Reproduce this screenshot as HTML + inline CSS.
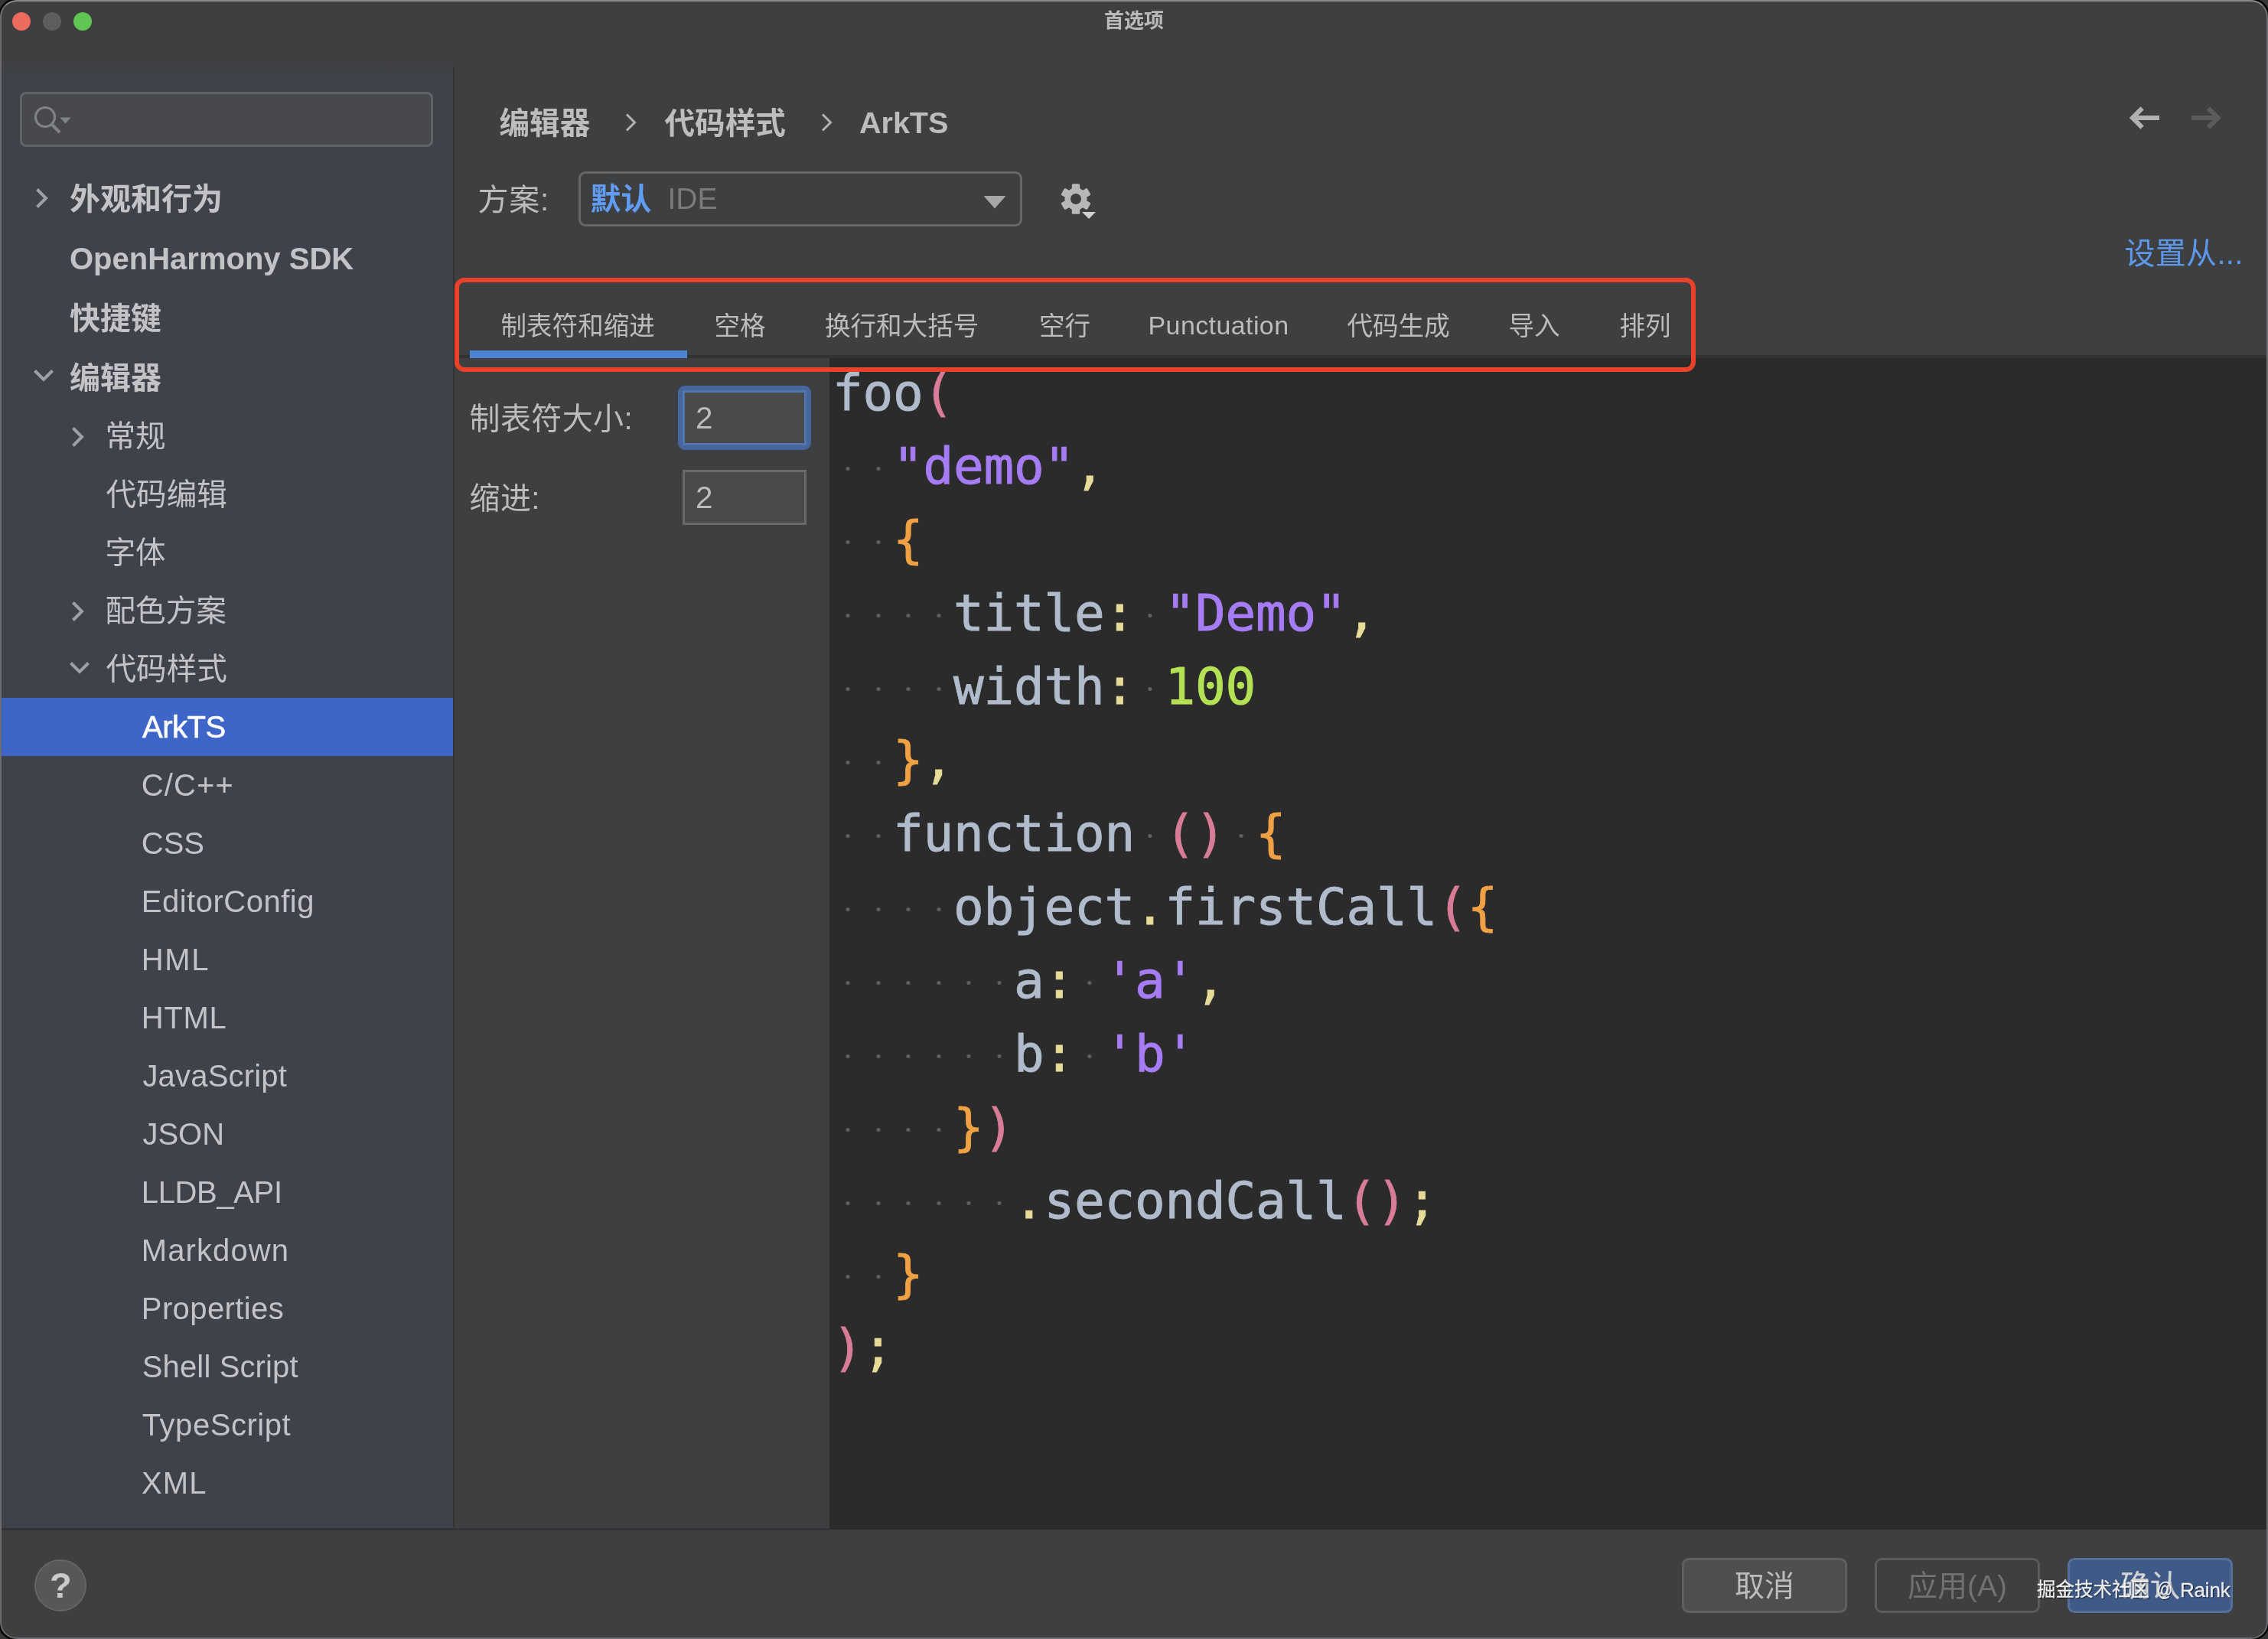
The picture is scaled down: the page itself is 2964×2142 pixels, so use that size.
<!DOCTYPE html>
<html lang="zh-CN">
<head>
<meta charset="utf-8">
<title>首选项</title>
<style>
html,body{margin:0;padding:0;}
body{width:2964px;height:2142px;background:#363636;overflow:hidden;position:relative;
  font-family:"Liberation Sans","Noto Sans CJK SC",sans-serif;color:#bbbcbe;}
.abs{position:absolute;}
.t{position:absolute;white-space:nowrap;line-height:1;}
#win{position:absolute;left:0;top:0;width:2964px;height:2142px;box-sizing:border-box;
  border:2px solid #6c6e71;border-top-color:#8a8c8e;border-radius:22px;background:#3e3f41;overflow:hidden;will-change:transform;box-shadow:0 0 0 2.5px #000;}
/* everything inside #inner is positioned in page coordinates */
#inner{position:absolute;left:-2px;top:-2px;width:2964px;height:2142px;}
#sidebar{left:2px;top:88px;width:590px;height:1909px;background:#3f424a;}
#sidegrad{left:2px;top:76px;width:590px;height:24px;background:linear-gradient(#3e3f41,#3f424a);}
#sidesep{left:592.4px;top:88px;width:1.6px;height:1908px;background:#323337;}
.light{border-radius:50%;width:24px;height:24px;top:16px;}
.row{position:absolute;left:0;width:592px;height:76px;}
.si{position:absolute;white-space:nowrap;font-size:40px;line-height:76px;height:76px;color:#c1c3c7;}
.b{font-weight:700;}
.chev{position:absolute;}
#editor{left:1084px;top:468px;width:1878px;height:1531px;background:#2b2b2b;}
.code{position:absolute;left:1088px;white-space:pre;font-family:"DejaVu Sans Mono","Liberation Mono",monospace;
  font-size:66px;line-height:96px;height:96px;color:#b0bccc;letter-spacing:-0.23px;-webkit-text-stroke:0.9px currentColor;}
.ws{display:inline-block;width:39.5px;height:96px;vertical-align:top;background:radial-gradient(circle at 19.9px 50.5px,#5f5f5f 0,#5f5f5f 1.9px,rgba(95,95,95,0) 3.1px);}
.pk{color:#d87c98;} .pu{color:#a67cf5;} .ye{color:#e6dc98;} .or{color:#f0a144;} .gr{color:#b5e254;}
.tab{position:absolute;top:408px;font-size:33.55px;line-height:38px;color:#bbbcbe;white-space:nowrap;}
.btn{position:absolute;top:2036px;height:72px;width:216px;box-sizing:border-box;border-radius:9px;
  font-size:39px;line-height:68px;text-align:center;}
</style>
</head>
<body>
<div id="win"><div id="inner">

<!-- title bar -->
<div class="abs light" style="left:16px;background:#ed6a5e;"></div>
<div class="abs light" style="left:56px;background:#5d5e60;"></div>
<div class="abs light" style="left:96px;background:#61c554;"></div>
<div class="t b" id="title" style="left:1443px;top:14px;font-size:26px;line-height:26px;color:#b9babc;">首选项</div>

<!-- sidebar -->
<div class="abs" id="sidebar"></div>
<div class="abs" id="sidegrad"></div>
<div class="abs" id="sidesep"></div>

<div class="abs" id="search" style="left:26px;top:120px;width:540px;height:72px;box-sizing:border-box;border:3px solid #5f6266;border-radius:8px;background:#47494c;"></div>
<svg class="abs" style="left:40px;top:132px;" width="60" height="48" viewBox="0 0 60 48">
  <circle cx="19" cy="21" r="12.5" fill="none" stroke="#7f8388" stroke-width="3.2"/>
  <path d="M27.5 30.5 L38 41" stroke="#7f8388" stroke-width="4" fill="none"/>
  <path d="M38.5 21.5 h14 l-7 8 z" fill="#7f8388"/>
</svg>

<div id="tree">
<div class="row" id="selrow" style="left:2px;top:912px;width:590px;background:#3e65c8;"></div>
<div class="si b" id="r0" style="left:91px;top:222px;">外观和行为</div>
<svg class="chev" style="left:45.0px;top:243.8px;" width="20" height="30" viewBox="0 0 20 30"><path d="M3.5 3.5 L15 15 L3.5 26.5" fill="none" stroke="#9da0a6" stroke-width="4"/></svg>
<div class="si b" id="r1" style="left:91px;top:300px;">OpenHarmony SDK</div>
<div class="si b" id="r2" style="left:91px;top:378px;">快捷键</div>
<div class="si b" id="r3" style="left:91px;top:456px;">编辑器</div>
<svg class="chev" style="left:41.5px;top:480.6px;" width="30" height="20" viewBox="0 0 30 20"><path d="M3.5 3.5 L15 15 L26.5 3.5" fill="none" stroke="#9da0a6" stroke-width="4"/></svg>
<div class="si" id="r4" style="left:137.5px;top:532px;font-size:39.6px;">常规</div>
<svg class="chev" style="left:92.3px;top:555.5px;" width="20" height="30" viewBox="0 0 20 30"><path d="M3.5 3.5 L15 15 L3.5 26.5" fill="none" stroke="#9da0a6" stroke-width="4"/></svg>
<div class="si" id="r5" style="left:138.5px;top:608px;font-size:39.6px;">代码编辑</div>
<div class="si" id="r6" style="left:137.5px;top:684px;font-size:39.6px;">字体</div>
<div class="si" id="r7" style="left:137.5px;top:760px;font-size:39.6px;">配色方案</div>
<svg class="chev" style="left:92.3px;top:783.5px;" width="20" height="30" viewBox="0 0 20 30"><path d="M3.5 3.5 L15 15 L3.5 26.5" fill="none" stroke="#9da0a6" stroke-width="4"/></svg>
<div class="si" id="r8" style="left:138.5px;top:836px;font-size:39.6px;">代码样式</div>
<svg class="chev" style="left:89.4px;top:862.6px;" width="30" height="20" viewBox="0 0 30 20"><path d="M3.5 3.5 L15 15 L26.5 3.5" fill="none" stroke="#9da0a6" stroke-width="4"/></svg>
<div class="si" id="r9" style="left:186.0px;top:912px;color:#fff;letter-spacing:-0.50px;-webkit-text-stroke:0.6px #fff;">ArkTS</div>
<div class="si" id="r10" style="left:184.8px;top:988px;letter-spacing:1.10px;">C/C++</div>
<div class="si" id="r11" style="left:184.8px;top:1064px;">CSS</div>
<div class="si" id="r12" style="left:184.8px;top:1140px;letter-spacing:0.50px;">EditorConfig</div>
<div class="si" id="r13" style="left:184.8px;top:1216px;letter-spacing:1.60px;">HML</div>
<div class="si" id="r14" style="left:184.8px;top:1292px;letter-spacing:0.70px;">HTML</div>
<div class="si" id="r15" style="left:186.4px;top:1368px;letter-spacing:0.20px;">JavaScript</div>
<div class="si" id="r16" style="left:186.4px;top:1444px;">JSON</div>
<div class="si" id="r17" style="left:184.8px;top:1520px;letter-spacing:-0.36px;">LLDB_API</div>
<div class="si" id="r18" style="left:184.8px;top:1596px;letter-spacing:1.10px;">Markdown</div>
<div class="si" id="r19" style="left:184.8px;top:1672px;letter-spacing:0.40px;">Properties</div>
<div class="si" id="r20" style="left:185.8px;top:1748px;letter-spacing:0.13px;">Shell Script</div>
<div class="si" id="r21" style="left:185.8px;top:1824px;letter-spacing:0.55px;">TypeScript</div>
<div class="si" id="r22" style="left:185.1px;top:1900px;letter-spacing:1.10px;">XML</div>
</div>

<!-- right panel -->
<div class="abs" id="editor"></div>


<!-- breadcrumb -->
<div class="t b" id="bc1" style="left:652.5px;top:140.5px;font-size:39.6px;line-height:40px;color:#bcbdbf;">编辑器</div>
<svg class="abs" style="left:814px;top:145px;" width="22" height="30" viewBox="0 0 22 30"><path d="M5 4.5 L15.5 15 L5 25.5" fill="none" stroke="#b2b3b5" stroke-width="3"/></svg>
<div class="t b" id="bc2" style="left:868.5px;top:140.5px;font-size:39.6px;line-height:40px;color:#bcbdbf;">代码样式</div>
<svg class="abs" style="left:1070px;top:145px;" width="22" height="30" viewBox="0 0 22 30"><path d="M5 4.5 L15.5 15 L5 25.5" fill="none" stroke="#b2b3b5" stroke-width="3"/></svg>
<div class="t b" id="bc3" style="left:1123px;top:140px;font-size:39.5px;line-height:40px;color:#bcbdbf;">ArkTS</div>

<!-- nav arrows -->
<svg class="abs" id="back" style="left:2780px;top:134px;" width="46" height="40" viewBox="0 0 46 40"><path d="M19.6 7.4 L7 20 L19.6 32.6 M7 20 H42" fill="none" stroke="#b0b1b2" stroke-width="6"/></svg>
<svg class="abs" id="fwd" style="left:2861px;top:134px;" width="46" height="40" viewBox="0 0 46 40"><path d="M25 7.4 L37.6 20 L25 32.6 M37.6 20 H3" fill="none" stroke="#5a5b5c" stroke-width="6"/></svg>

<!-- scheme row -->
<div class="t" id="schemeLbl" style="left:624.5px;top:241px;letter-spacing:0.8px;font-size:40px;line-height:40px;color:#bbbcbe;">方案:</div>
<div class="abs" id="combo" style="left:756px;top:224px;width:580px;height:72px;box-sizing:border-box;border:3px solid #646668;border-radius:9px;background:#3e3f41;"></div>
<div class="t b" id="schemeVal" style="left:771.5px;top:240px;font-size:40px;line-height:40px;color:#609cf2;">默认</div>
<div class="t" id="schemeIde" style="left:872.5px;top:240px;font-size:39px;line-height:40px;color:#787a7c;">IDE</div>
<svg class="abs" style="left:1284px;top:254px;" width="32" height="20" viewBox="0 0 32 20"><path d="M1.5 2 H30.5 L16 18.5 Z" fill="#a5a6a8"/></svg>
<svg class="abs" id="gear" style="left:1382px;top:236px;" width="56" height="56" viewBox="0 0 56 56">
  <g transform="translate(24,24)" fill="#b6b7b8">
    <circle r="14.5"/>
    <g id="tooth"><rect x="-5.2" y="-19.8" width="10.4" height="9" rx="1.5"/></g>
    <rect x="-5.2" y="-19.8" width="10.4" height="9" rx="1.5" transform="rotate(60)"/>
    <rect x="-5.2" y="-19.8" width="10.4" height="9" rx="1.5" transform="rotate(120)"/>
    <rect x="-5.2" y="-19.8" width="10.4" height="9" rx="1.5" transform="rotate(180)"/>
    <rect x="-5.2" y="-19.8" width="10.4" height="9" rx="1.5" transform="rotate(240)"/>
    <rect x="-5.2" y="-19.8" width="10.4" height="9" rx="1.5" transform="rotate(300)"/>
    <circle r="7" fill="#3e3f41"/>
  </g>
  <path d="M32 41 H50 L41 50 Z" fill="#d0d1d2"/>
</svg>
<div class="t" id="setfrom" style="left:2776.5px;top:310.5px;font-size:40px;letter-spacing:0.3px;line-height:40px;color:#5c97ea;">设置从...</div>

<!-- tabs -->
<div class="abs" id="tabline" style="left:594px;top:464px;width:2368px;height:4px;background:#323233;"></div>
<div class="tab" id="tab1" style="left:654.5px;">制表符和缩进</div>
<div class="tab" id="tab2" style="left:933.5px;">空格</div>
<div class="tab" id="tab3" style="left:1078px;">换行和大括号</div>
<div class="tab" id="tab4" style="left:1358px;">空行</div>
<div class="tab" id="tab5" style="left:1500.5px;top:406px;font-size:34px;letter-spacing:0.4px;">Punctuation</div>
<div class="tab" id="tab6" style="left:1760.5px;">代码生成</div>
<div class="tab" id="tab7" style="left:1971.5px;">导入</div>
<div class="tab" id="tab8" style="left:2116.5px;">排列</div>
<div class="abs" id="tabul" style="left:614px;top:458px;width:284px;height:10px;background:#4c83d2;"></div>

<!-- form -->
<div class="t" id="lbl1" style="left:613.5px;top:527px;font-size:40px;letter-spacing:0.4px;line-height:40px;color:#bbbcbe;">制表符大小:</div>
<div class="abs" id="inp1" style="left:886px;top:504px;width:174px;height:84px;box-sizing:border-box;border:6px solid #46659b;border-radius:9px;background:#46659b;"><div style="width:100%;height:100%;box-sizing:border-box;border:3px solid #5277b0;background:#484a4c;"></div></div>
<div class="t" id="inp1v" style="left:909px;top:526px;font-size:40.5px;line-height:40px;color:#bbbcbe;">2</div>
<div class="t" id="lbl2" style="left:613.5px;top:631px;font-size:40px;letter-spacing:0.4px;line-height:40px;color:#bbbcbe;">缩进:</div>
<div class="abs" id="inp2" style="left:892px;top:614px;width:162px;height:72px;box-sizing:border-box;border:3px solid #68696a;background:#484a4c;"></div>
<div class="t" id="inp2v" style="left:909px;top:630px;font-size:40.5px;line-height:40px;color:#bbbcbe;">2</div>

<!-- code -->
<div class="code" id="c0" style="top:466px;">foo<span class="pk">(</span></div>
<div class="code" id="c1" style="top:562px;"><span class="ws"> </span><span class="ws"> </span><span class="pu">"demo"</span><span class="ye">,</span></div>
<div class="code" id="c2" style="top:658px;"><span class="ws"> </span><span class="ws"> </span><span class="or">{</span></div>
<div class="code" id="c3" style="top:754px;"><span class="ws"> </span><span class="ws"> </span><span class="ws"> </span><span class="ws"> </span>title<span class="ye">:</span><span class="ws"> </span><span class="pu">"Demo"</span><span class="ye">,</span></div>
<div class="code" id="c4" style="top:850px;"><span class="ws"> </span><span class="ws"> </span><span class="ws"> </span><span class="ws"> </span>width<span class="ye">:</span><span class="ws"> </span><span class="gr">100</span></div>
<div class="code" id="c5" style="top:946px;"><span class="ws"> </span><span class="ws"> </span><span class="or">}</span><span class="ye">,</span></div>
<div class="code" id="c6" style="top:1042px;"><span class="ws"> </span><span class="ws"> </span>function<span class="ws"> </span><span class="pk">()</span><span class="ws"> </span><span class="or">{</span></div>
<div class="code" id="c7" style="top:1138px;"><span class="ws"> </span><span class="ws"> </span><span class="ws"> </span><span class="ws"> </span>object<span class="ye">.</span>firstCall<span class="pk">(</span><span class="or">{</span></div>
<div class="code" id="c8" style="top:1234px;"><span class="ws"> </span><span class="ws"> </span><span class="ws"> </span><span class="ws"> </span><span class="ws"> </span><span class="ws"> </span>a<span class="ye">:</span><span class="ws"> </span><span class="pu">'a'</span><span class="ye">,</span></div>
<div class="code" id="c9" style="top:1330px;"><span class="ws"> </span><span class="ws"> </span><span class="ws"> </span><span class="ws"> </span><span class="ws"> </span><span class="ws"> </span>b<span class="ye">:</span><span class="ws"> </span><span class="pu">'b'</span></div>
<div class="code" id="c10" style="top:1426px;"><span class="ws"> </span><span class="ws"> </span><span class="ws"> </span><span class="ws"> </span><span class="or">}</span><span class="pk">)</span></div>
<div class="code" id="c11" style="top:1522px;"><span class="ws"> </span><span class="ws"> </span><span class="ws"> </span><span class="ws"> </span><span class="ws"> </span><span class="ws"> </span><span class="ye">.</span>secondCall<span class="pk">()</span><span class="ye">;</span></div>
<div class="code" id="c12" style="top:1618px;"><span class="ws"> </span><span class="ws"> </span><span class="or">}</span></div>
<div class="code" id="c13" style="top:1714px;"><span class="pk">)</span><span class="ye">;</span></div>

<!-- red highlight box -->
<div class="abs" id="redbox" style="left:594px;top:363px;width:1622px;height:123px;box-sizing:border-box;border:6px solid #e8432a;border-radius:13px;"></div>

<!-- bottom bar -->
<div class="abs" id="botline" style="left:2px;top:1996.5px;width:1082px;height:3px;background:#323437;"></div>
<div class="abs" id="botbar" style="left:2px;top:1999.5px;width:2960px;height:141px;background:#3e3f41;"></div>

<!-- buttons -->
<div class="abs" id="help" style="left:45px;top:2038px;width:68px;height:68px;box-sizing:border-box;border-radius:50%;border:2px solid #636567;background:#555759;"></div>
<div class="t b" id="helpq" style="left:65px;top:2048px;font-size:47px;line-height:47px;color:#c8c9cb;">?</div>
<div class="btn" id="bCancel" style="left:2198px;border:3px solid #5e6062;background:#4c4e50;color:#bbbcbe;">取消</div>
<div class="btn" id="bApply" style="left:2450px;border:3px solid #5a5c5e;background:#3e3f41;color:#6f7173;">应用(A)</div>
<div class="btn" id="bOk" style="left:2702px;border:3px solid #55709b;background:#405a87;color:#d2d3d5;-webkit-text-stroke:0.4px #d2d3d5;">确认</div>
<div class="t" id="wm" style="left:2662px;top:2064px;font-size:24.5px;line-height:28px;color:rgba(255,255,255,.9);text-shadow:1px 1px 1.5px rgba(0,0,0,.75);-webkit-text-stroke:0.3px rgba(255,255,255,.9);">掘金技术社区</div>
<div class="t" id="wm2" style="left:2819px;top:2063px;font-size:25px;line-height:28px;color:rgba(255,255,255,.9);text-shadow:1px 1px 1.5px rgba(0,0,0,.75);-webkit-text-stroke:0.3px rgba(255,255,255,.9);transform:scaleX(.8);transform-origin:0 50%;">@</div>
<div class="t" id="wm3" style="left:2849px;top:2064px;font-size:26px;line-height:28px;letter-spacing:-0.2px;color:rgba(255,255,255,.9);text-shadow:1px 1px 1.5px rgba(0,0,0,.75);-webkit-text-stroke:0.3px rgba(255,255,255,.9);">Raink</div>

</div></div>
</body>
</html>
